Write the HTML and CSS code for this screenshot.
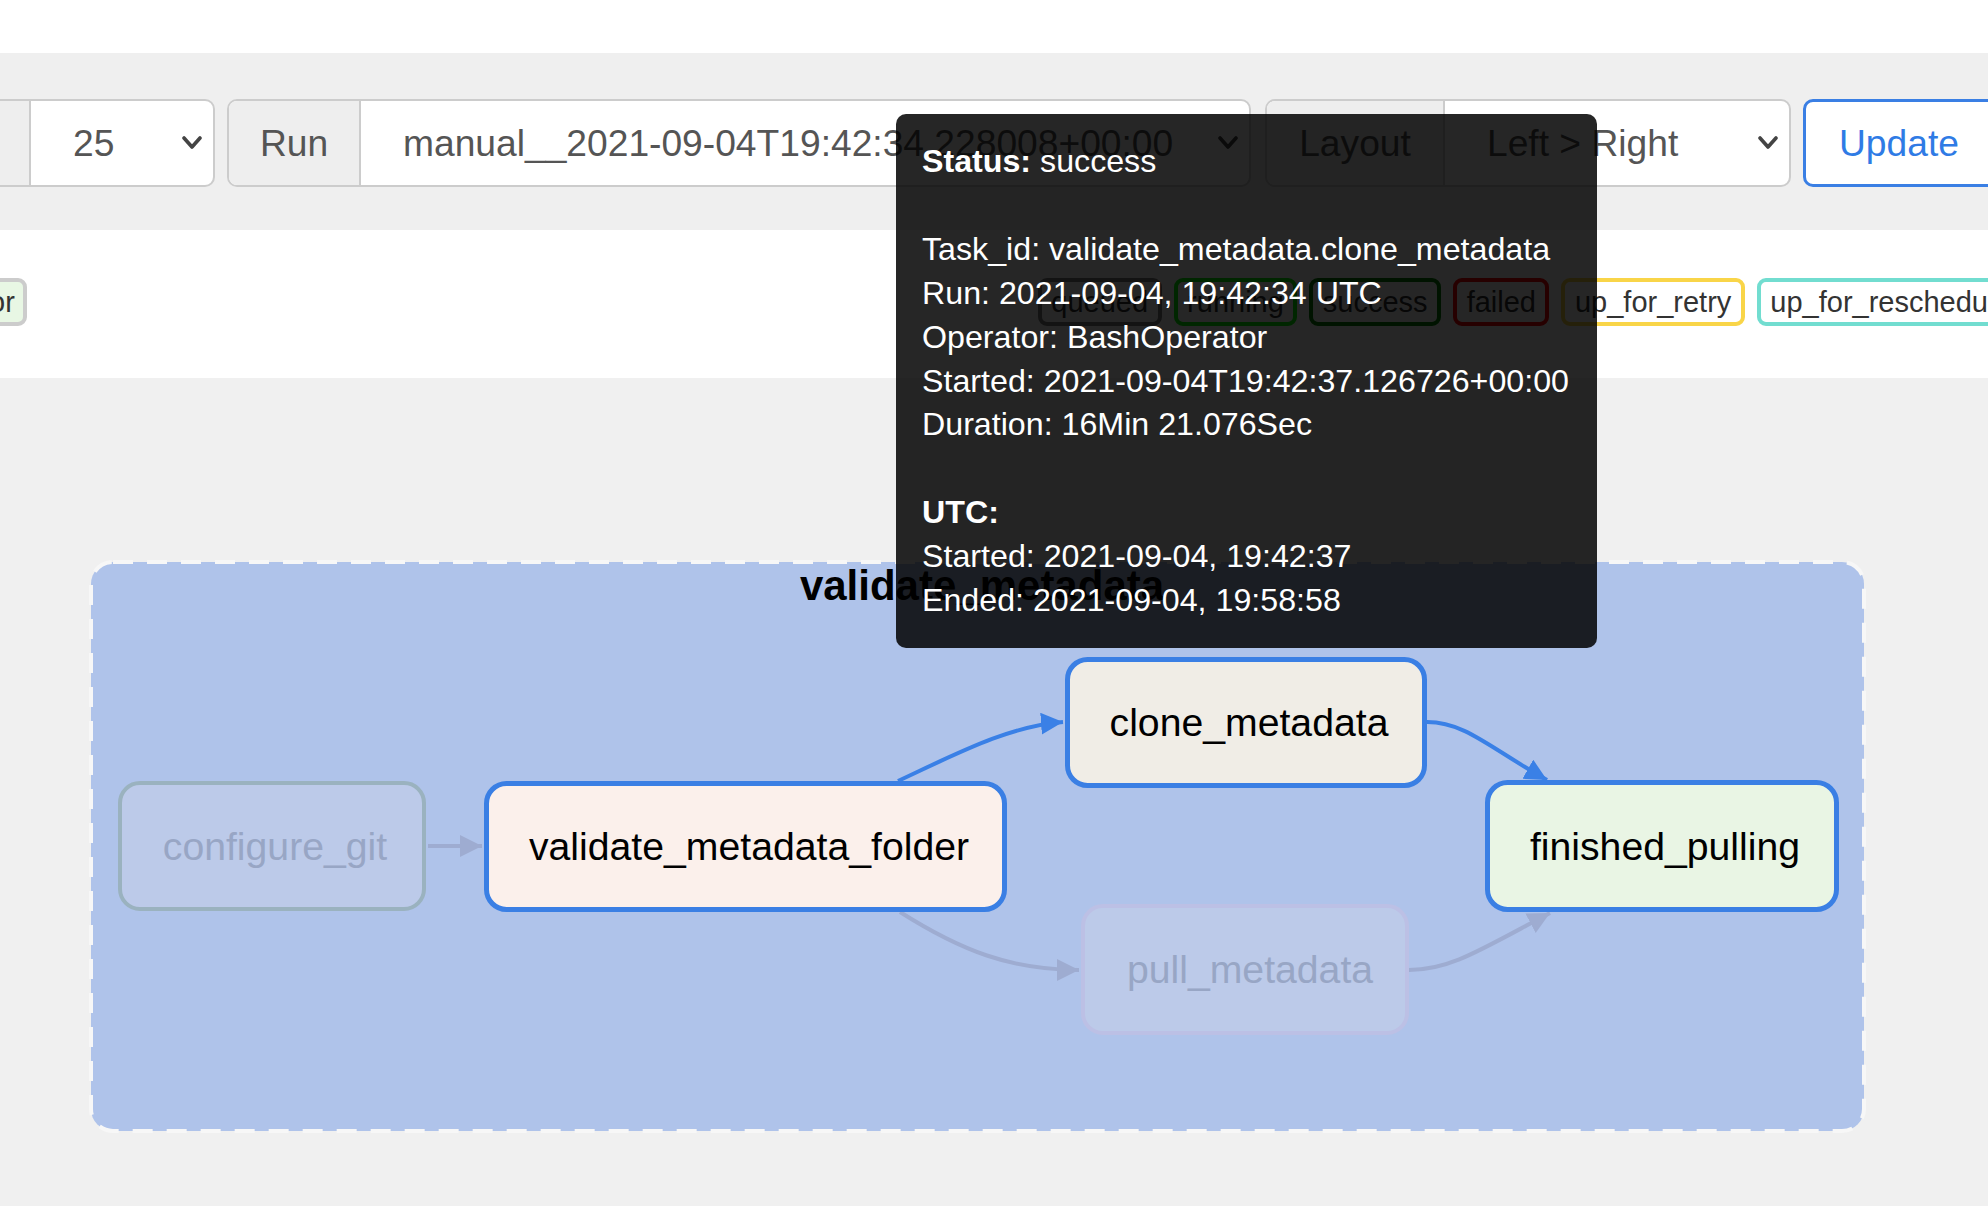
FILE: index.html
```html
<!DOCTYPE html>
<html>
<head>
<meta charset="utf-8">
<link rel="stylesheet" href="styles.css">
</head>
<body>
<div class="page">
  <div class="topbar"></div>
  <div class="toolbar">
    <div class="group group-runs">
      <div class="addon addon-runs">Runs</div>
      <div class="select">
        <span class="select-text">25</span>
        <svg class="chev" viewBox="0 0 20 14"><polyline points="2,2 10,11 18,2"/></svg>
      </div>
    </div>
    <div class="group group-run">
      <div class="addon addon-run">Run</div>
      <div class="select">
        <span class="select-text">manual__2021-09-04T19:42:34.228008+00:00</span>
        <svg class="chev" viewBox="0 0 20 14"><polyline points="2,2 10,11 18,2"/></svg>
      </div>
    </div>
    <div class="group group-layout">
      <div class="addon addon-layout">Layout</div>
      <div class="select">
        <span class="select-text">Left &gt; Right</span>
        <svg class="chev" viewBox="0 0 20 14"><polyline points="2,2 10,11 18,2"/></svg>
      </div>
    </div>
    <button class="btn-update">Update</button>
  </div>
  <div class="legend">
    <div class="legend-ops">
      <span class="badge badge-op">DummyOperator</span>
    </div>
    <div class="legend-states">
      <span class="badge st-queued">queued</span>
      <span class="badge st-running">running</span>
      <span class="badge st-success">success</span>
      <span class="badge st-failed">failed</span>
      <span class="badge st-retry">up_for_retry</span>
      <span class="badge st-resched">up_for_reschedule</span>
      <span class="badge st-upfailed">upstream_failed</span>
    </div>
  </div>
  <div class="graph">
    <svg class="graph-svg" viewBox="0 378 1988 828" width="1988" height="828">
      <defs>
        <marker id="arrow-blue" viewBox="0 0 10 10" refX="10" refY="5" markerWidth="22" markerHeight="22" markerUnits="userSpaceOnUse" orient="auto">
          <path d="M0,0 L10,5 L0,10 z" fill="#3a80e6"/>
        </marker>
        <marker id="arrow-gray" viewBox="0 0 10 10" refX="10" refY="5" markerWidth="22" markerHeight="22" markerUnits="userSpaceOnUse" orient="auto">
          <path d="M0,0 L10,5 L0,10 z" fill="#9eacd1"/>
        </marker>
      </defs>
      <rect class="cluster" x="91" y="562" width="1773" height="569" rx="22" ry="22"/>
      <text class="cluster-label" x="982" y="600">validate_metadata</text>

      <path class="edge edge-gray" d="M428 846 L482 846" marker-end="url(#arrow-gray)"/>
      <path class="edge edge-blue" d="M898 781 C 960 752, 1010 726, 1063 722" marker-end="url(#arrow-blue)"/>
      <path class="edge edge-blue" d="M1427 722 C 1465 722, 1490 748, 1547 780" marker-end="url(#arrow-blue)"/>
      <path class="edge edge-gray" d="M900 912 C 960 950, 1010 970, 1079 970" marker-end="url(#arrow-gray)"/>
      <path class="edge edge-gray" d="M1409 970 C 1450 970, 1480 950, 1550 913" marker-end="url(#arrow-gray)"/>

      <g class="node node-faded-git">
        <rect x="120" y="783" width="304" height="126" rx="20" ry="20"/>
        <text x="275" y="860">configure_git</text>
      </g>
      <g class="node node-active node-python">
        <rect x="486.5" y="783.5" width="518" height="126" rx="20" ry="20"/>
        <text x="749" y="860">validate_metadata_folder</text>
      </g>
      <g class="node node-active node-bash">
        <rect x="1067.5" y="659.5" width="357" height="126" rx="20" ry="20"/>
        <text x="1249" y="736">clone_metadata</text>
      </g>
      <g class="node node-active node-dummy">
        <rect x="1487.5" y="782.5" width="349" height="127" rx="20" ry="20"/>
        <text x="1665" y="860">finished_pulling</text>
      </g>
      <g class="node node-faded-pull">
        <rect x="1083" y="906" width="324" height="127" rx="20" ry="20"/>
        <text x="1250" y="983">pull_metadata</text>
      </g>
    </svg>
  </div>
  <div class="tooltip">
    <div><b>Status:</b> success</div>
    <div class="blank"></div>
    <div>Task_id: validate_metadata.clone_metadata</div>
    <div>Run: 2021-09-04, 19:42:34 UTC</div>
    <div>Operator: BashOperator</div>
    <div>Started: 2021-09-04T19:42:37.126726+00:00</div>
    <div>Duration: 16Min 21.076Sec</div>
    <div class="blank"></div>
    <div><b>UTC:</b></div>
    <div>Started: 2021-09-04, 19:42:37</div>
    <div>Ended: 2021-09-04, 19:58:58</div>
  </div>
</div>
</body>
</html>
```

FILE: styles.css
```css
* { box-sizing: border-box; }
html, body {
  margin: 0;
  padding: 0;
  width: 1988px;
  height: 1206px;
  overflow: hidden;
  background: #f0f0f0;
  font-family: "Liberation Sans", Arial, Helvetica, sans-serif;
}
.page {
  position: relative;
  width: 1988px;
  height: 1206px;
  display: flex;
  flex-direction: column;
  overflow: hidden;
}
.topbar {
  height: 53px;
  background: #ffffff;
  flex: none;
}
.toolbar {
  height: 177px;
  flex: none;
  background: #efefef;
  display: flex;
  align-items: flex-start;
  padding-top: 46px;
  margin-left: -120px;
  gap: 12px;
}
.group {
  display: flex;
  height: 88px;
  border: 2px solid #cccccc;
  border-radius: 10px;
  overflow: hidden;
  background: #ffffff;
  flex: none;
}
.group-runs { width: 335px; }
.group-run { width: 1024px; }
.group-layout { width: 526px; margin-left: 2px; }
.addon {
  background: #eeeeee;
  border-right: 2px solid #cccccc;
  display: flex;
  align-items: center;
  justify-content: center;
  color: #555555;
  font-size: 37.2px;
  flex: none;
}
.addon-runs { width: 149px; }
.addon-run { width: 132px; }
.addon-layout { width: 178px; }
.select {
  flex: 1;
  display: flex;
  align-items: center;
  padding-left: 42px;
  padding-right: 11px;
  color: #555555;
  font-size: 37.2px;
  white-space: nowrap;
}
.select-text { flex: 1; }
.chev {
  width: 20px;
  height: 14px;
  flex: none;
}
.chev polyline {
  fill: none;
  stroke: #444444;
  stroke-width: 3.6;
  stroke-linecap: round;
  stroke-linejoin: round;
}
.btn-update {
  flex: none;
  width: 200px;
  height: 88px;
  border: 3px solid #3a7fe4;
  border-radius: 10px;
  background: #ffffff;
  color: #2f7be5;
  font-family: "Liberation Sans", Arial, Helvetica, sans-serif;
  font-size: 37.2px;
  text-align: left;
  padding: 0 0 0 33px;
}
.legend {
  height: 148px;
  flex: none;
  background: #ffffff;
  display: flex;
  align-items: flex-start;
  padding-top: 48px;
  white-space: nowrap;
}
.legend-ops {
  display: flex;
  margin-left: -213px;
  flex: none;
}
.legend-states {
  display: flex;
  gap: 12px;
  margin-left: 1011px;
  flex: none;
}
.badge {
  display: inline-block;
  height: 48px;
  line-height: 40px;
  font-size: 29px;
  color: #333333;
  border: 4px solid #cccccc;
  border-radius: 9px;
  padding: 0 9.5px;
  background: #ffffff;
}
.badge-op { background: #e8f7e4; border-color: #cccccc; padding-right: 8px; }
.st-queued { border-color: #808080; }
.st-running { border-color: #00ff00; }
.st-success { border-color: #008000; }
.st-failed { border-color: #ff0000; }
.st-retry { border-color: #f9d548; }
.st-resched { border-color: #72ddd0; }
.st-upfailed { border-color: #ffa500; }
.graph {
  flex: 1;
  background: #f0f0f0;
  position: relative;
}
.graph-svg {
  display: block;
}
.cluster {
  fill: #afc3ea;
  stroke: #f7f7f7;
  stroke-width: 4;
  stroke-dasharray: 20 14;
}
.cluster-label {
  font-family: "Liberation Sans", Arial, Helvetica, sans-serif;
  font-weight: bold;
  font-size: 42px;
  fill: #000000;
  text-anchor: middle;
}
.edge {
  fill: none;
  stroke-width: 4;
}
.edge-blue { stroke: #3a80e6; }
.edge-gray { stroke: #9eacd1; }
.node text {
  font-family: "Liberation Sans", Arial, Helvetica, sans-serif;
  font-size: 39.2px;
  text-anchor: middle;
}
.node-active rect {
  stroke: #3a7fe4;
  stroke-width: 5;
}
.node-active text { fill: #000000; }
.node-python rect { fill: #fbf0eb; }
.node-bash rect { fill: #f0ede6; }
.node-dummy rect { fill: #e9f5e4; }
.node-faded-git rect {
  fill: #bccae9;
  stroke: #9ab2bf;
  stroke-width: 4;
}
.node-faded-pull rect {
  fill: #bccae9;
  stroke: #bcc0e5;
  stroke-width: 4;
}
.node-faded-git text, .node-faded-pull text { fill: #98a6c5; }
.tooltip {
  position: absolute;
  left: 896px;
  top: 114px;
  background: rgba(0, 0, 0, 0.85);
  color: #ffffff;
  border-radius: 10px;
  padding: 26px 28px 25px 26px;
  font-size: 32.2px;
  line-height: 43.9px;
  white-space: nowrap;
}
.tooltip .blank { height: 43.9px; }
.tooltip b { font-weight: bold; }
```
